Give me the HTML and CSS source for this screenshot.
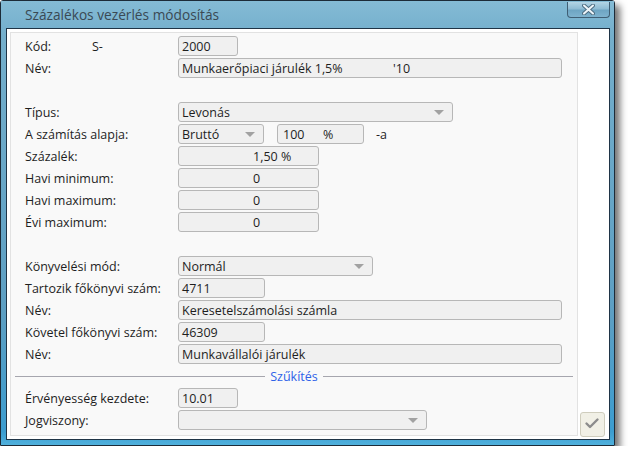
FILE: index.html
```html
<!DOCTYPE html>
<html lang="hu">
<head>
<meta charset="utf-8">
<title>Százalékos vezérlés módosítás</title>
<link rel="stylesheet" href="styles.css">
</head>
<body>
<div class="window">
  <div class="titlebar">
    <span class="title">Százalékos vezérlés módosítás</span>
    <div class="close">
      <svg width="13" height="11" viewBox="0 0 13 11">
        <path d="M2 1.5 L11 9.5 M11 1.5 L2 9.5" stroke="#4d6d82" stroke-width="4" stroke-linecap="round" fill="none"/>
        <path d="M2 1.5 L11 9.5 M11 1.5 L2 9.5" stroke="#eef5f9" stroke-width="2" stroke-linecap="round" fill="none"/>
      </svg>
    </div>
  </div>
  <div class="client">
    <div class="panel">
      <div class="row"><span class="label"><span class="lead">Kód:</span>S-</span><span class="field w60">2000</span></div>
      <div class="row"><span class="label">Név:</span><span class="field w384"><span class="nametext">Munkaerőpiaci járulék 1,5%</span><span class="suffix">'10</span></span></div>
      <div class="row"></div>
      <div class="row"><span class="label">Típus:</span><span class="field combo w275">Levonás<i class="arrow"></i></span></div>
      <div class="row"><span class="label">A számítás alapja:</span><span class="field combo w86">Bruttó<i class="arrow"></i></span><span class="field w87 gap13"><span class="hundred">100</span><span class="pct">%</span></span><span class="after">-a</span></div>
      <div class="row"><span class="label">Százalék:</span><span class="field num w141">1,50 %</span></div>
      <div class="row"><span class="label">Havi minimum:</span><span class="field num w141">0</span></div>
      <div class="row"><span class="label">Havi maximum:</span><span class="field num w141">0</span></div>
      <div class="row"><span class="label">Évi maximum:</span><span class="field num w141">0</span></div>
      <div class="row"></div>
      <div class="row"><span class="label">Könyvelési mód:</span><span class="field combo w195">Normál<i class="arrow"></i></span></div>
      <div class="row"><span class="label">Tartozik főkönyvi szám:</span><span class="field w87">4711</span></div>
      <div class="row"><span class="label">Név:</span><span class="field w384">Keresetelszámolási számla</span></div>
      <div class="row"><span class="label">Követel főkönyvi szám:</span><span class="field w87">46309</span></div>
      <div class="row"><span class="label">Név:</span><span class="field w384">Munkavállalói járulék</span></div>
      <div class="divider"><span class="line"></span><span class="divtext">Szűkítés</span><span class="line"></span></div>
      <div class="row"><span class="label">Érvényesség kezdete:</span><span class="field w60">10.01</span></div>
      <div class="row"><span class="label">Jogviszony:</span><span class="field combo w249"><i class="arrow"></i></span></div>
    </div>
    <div class="side">
      <div class="okbtn">
        <svg width="25" height="25" viewBox="0 0 25 25">
          <path d="M6.5 11.5 L10 15 L17.5 7.5" stroke="#8c8c8c" stroke-width="2.4" fill="none" stroke-linecap="round" stroke-linejoin="round"/>
        </svg>
      </div>
    </div>
  </div>
</div>
</body>
</html>
```

FILE: styles.css
```css
html, body {
  margin: 0;
  padding: 0;
  background: #ffffff;
}

body {
  font-family: "Open Sans", "Noto Sans", sans-serif;
  font-size: 12.5px;
  color: #1e1e1e;
}

.window {
  width: 615px;
  height: 446px;
  box-sizing: border-box;
  border: 1px solid #1c2b38;
  border-radius: 3px 3px 0 0;
  background: linear-gradient(to bottom, #7fb8d3 0%, #74afcc 8%, #5d9fc3 70%, #3c9dd0 97%, #4fb0dc 100%);
  box-shadow: 5px 5px 7px rgba(0, 0, 0, 0.55);
  display: flex;
  flex-direction: column;
  position: relative;
}

.titlebar {
  height: 27px;
  flex: none;
  display: flex;
  align-items: center;
  padding-left: 24px;
  background: linear-gradient(to bottom, #84bbd5, #77b1ce);
}

.title {
  font-size: 13.7px;
  color: #3a4954;
  margin-top: -1px;
}

.close {
  position: absolute;
  top: 1px;
  right: 4px;
  width: 43px;
  height: 16px;
  box-sizing: border-box;
  border: 1px solid #3f5e74;
  border-top: none;
  border-radius: 0 0 4px 4px;
  background: linear-gradient(to bottom, #b3d4e5 0%, #8fbcd4 45%, #6ea5c3 55%, #7fb3cf 100%);
  display: flex;
  align-items: center;
  justify-content: center;
}

.client {
  flex: 1;
  margin: 0 4px 5px 5px;
  border: 1px solid #1f3446;
  background: #ffffff;
  display: flex;
  padding: 3px 0 3px 3px;
}

.panel {
  width: 568px;
  box-sizing: border-box;
  flex: none;
  border: 1px solid #e2e2e2;
  background: #f9f9f9;
  padding: 3px 0 0 14px;
  display: flex;
  flex-direction: column;
  gap: 2px;
}

.row {
  height: 20px;
  display: flex;
  align-items: center;
}

.label {
  width: 153px;
  flex: none;
  white-space: nowrap;
}

.lead {
  display: inline-block;
  width: 67px;
}

.field {
  height: 20px;
  box-sizing: border-box;
  border: 1px solid #b7b7b7;
  border-radius: 3px;
  background: #f0f0f0;
  padding: 0 3px;
  display: flex;
  align-items: center;
  white-space: nowrap;
  position: relative;
}

.num {
  padding-left: 74px;
}

.w60 { width: 60px; }
.w86 { width: 86px; }
.w87 { width: 87px; }
.w141 { width: 141px; }
.w195 { width: 195px; }
.w249 { width: 249px; }
.w275 { width: 275px; }
.w384 { width: 384px; }

.gap13 {
  margin-left: 13px;
  padding-left: 5px;
}

.nametext {
  display: inline-block;
  width: 211px;
}

.hundred {
  display: inline-block;
  width: 40px;
}

.after {
  margin-left: 12px;
}

.arrow {
  position: absolute;
  right: 8px;
  top: 7px;
  width: 0;
  height: 0;
  border-left: 5px solid transparent;
  border-right: 5px solid transparent;
  border-top: 5px solid #a2a2a2;
}

.divider {
  height: 20px;
  display: flex;
  align-items: center;
  margin-left: -10px;
  width: 558px;
}

.line {
  flex: 1;
  height: 1px;
  background: #a6a6ae;
}

.divtext {
  color: #2e62e8;
  padding: 0 5px;
}

.side {
  flex: 1;
  display: flex;
  align-items: flex-end;
  padding: 0 0 0 2px;
}

.okbtn {
  width: 25px;
  height: 25px;
  box-sizing: border-box;
  border: 1px solid #cfcdbd;
  border-radius: 3px;
  background: #f1f0e6;
  margin-bottom: -1px;
  display: flex;
}

.okbtn svg {
  margin: -1px;
}
```
